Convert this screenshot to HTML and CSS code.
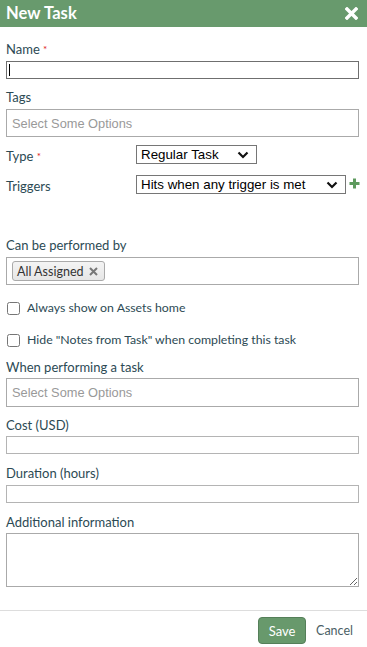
FILE: index.html
```html
<!DOCTYPE html>
<html lang="en">
<head>
  <meta charset="UTF-8" />
  <meta name="viewport" content="width=device-width, initial-scale=1" />
  <title>New Task</title>
  <link rel="stylesheet" href="styles.css">
</head>
<body>

  <header class="dlg-head">
    <h1>New Task</h1>
    <button class="close" aria-label="Close">
      <svg width="13" height="13" viewBox="0 0 13 13"><path d="M2 2 L11 11 M11 2 L2 11" stroke="#fff" stroke-width="3.4" stroke-linecap="square"/></svg>
    </button>
  </header>

  <form class="dlg-body">
    <div class="field f-name">
      <label>Name <span class="req">*</span></label>
      <div class="caret-wrap"><input type="text" class="txt dark"><span class="caret"></span></div>
    </div>

    <div class="field f-tags">
      <label>Tags</label>
      <div class="chosen"><span class="ph">Select Some Options</span></div>
    </div>

    <div class="row f-type">
      <label>Type <span class="req">*</span></label>
      <div class="sel w-type">
        <select><option>Regular Task</option></select>
        <svg class="chev" width="12" height="8" viewBox="0 0 12 8"><path d="M1.5 1.5 L6 6 L10.5 1.5" fill="none" stroke="#111" stroke-width="2.2"/></svg>
      </div>
    </div>

    <div class="row f-trig">
      <label>Triggers</label>
      <div class="sel w-trig">
        <select><option>Hits when any trigger is met</option></select>
        <svg class="chev" width="12" height="8" viewBox="0 0 12 8"><path d="M1.5 1.5 L6 6 L10.5 1.5" fill="none" stroke="#111" stroke-width="2.2"/></svg>
      </div>
      <svg class="plus" width="11" height="11" viewBox="0 0 11 11"><path d="M5.5 0.5 V10.5 M0.5 5.5 H10.5" stroke="#5e9a5e" stroke-width="3"/></svg>
    </div>

    <div class="field f-perf">
      <label>Can be performed by</label>
      <div class="chosen">
        <span class="chip">All Assigned
          <svg width="9" height="9" viewBox="0 0 9 9"><path d="M1 1 L8 8 M8 1 L1 8" stroke="#777" stroke-width="2"/></svg>
        </span>
      </div>
    </div>

    <label class="check c-first"><input type="checkbox"> Always show on Assets home</label>
    <label class="check c-second"><input type="checkbox"> Hide "Notes from Task" when completing this task</label>

    <div class="field f-when">
      <label>When performing a task</label>
      <div class="chosen"><span class="ph">Select Some Options</span></div>
    </div>

    <div class="field f-cost">
      <label>Cost (USD)</label>
      <input type="text" class="txt">
    </div>

    <div class="field f-dur">
      <label>Duration (hours)</label>
      <input type="text" class="txt">
    </div>

    <div class="field f-info">
      <label>Additional information</label>
      <textarea class="area"></textarea>
    </div>
  </form>

  <footer class="dlg-foot">
    <button class="save">Save</button>
    <a href="#" class="cancel">Cancel</a>
  </footer>

</body>
</html>
```

FILE: styles.css
```css
* { margin:0; padding:0; box-sizing:border-box; }
body { font-family:Lato, "Open Sans", sans-serif; font-size:13px; color:#2c4a54; background:#fff; width:367px; }

.dlg-head { background:#689a6d; height:27px; display:flex; align-items:center; justify-content:space-between; padding:0 9px 0 6px; }
.dlg-head h1 { color:#fff; font-size:16.5px; font-weight:700; letter-spacing:0.1px; line-height:27px; }
.close { background:none; border:none; display:flex; margin-top:-1px; }

.dlg-body { padding:14px 8px 0 6px; }
.field label, .row label { display:block; line-height:16px; }
.field label { margin-bottom:4px; }
.req { color:#e02020; font-size:10px; vertical-align:top; }

.txt { display:block; width:100%; height:18px; border:1px solid #b4b4b4; font:12px Lato, sans-serif; outline:none; }
.txt.dark { border-color:#6f6f6f; }
.caret-wrap { position:relative; }
.caret { position:absolute; left:3px; top:3px; width:1px; height:12px; background:#000; }

.chosen { height:28px; border:1px solid #aaa; display:flex; align-items:center; padding:0 5px; }
.ph { font:12.8px "Liberation Sans", Arial, sans-serif; color:#999; }
.chip { display:inline-flex; align-items:center; height:20px; padding:0 6px 0 4px; border:1px solid #aaa; border-radius:3px; background:linear-gradient(#f4f4f4, #e6e6e6); color:#333; font-size:12.5px; }
.chip svg { margin-left:6px; }

.row { display:grid; grid-template-columns:130px auto auto; justify-content:start; align-items:center; }
.sel { position:relative; }
.sel select { appearance:none; -webkit-appearance:none; display:block; height:19px; border:1px solid #767676; border-radius:0; background:#fff; font:13.33px "Liberation Sans", Arial, sans-serif; color:#000; padding:0 0 0 4px; }
.w-type select { width:121px; }
.w-trig select { width:210px; }
.chev { position:absolute; right:8px; top:6px; }
.plus { margin-left:3px; margin-top:-2px; }

.f-name { margin-bottom:10px; }
.f-tags { margin-bottom:8px; }
.f-type { margin-bottom:10px; }
.f-type label { margin-top:3px; }
.f-trig label { margin-top:4px; }
.f-trig { margin-bottom:43px; }
.f-perf { margin-bottom:15px; }

.check { display:flex; align-items:center; line-height:16px; padding-left:1px; font-size:12.3px; }
.check input { width:13px; height:13px; margin:0 7px 0 0; accent-color:#555; }
.c-first { margin-bottom:16px; }
.c-second { margin-bottom:11px; }
.f-when .chosen { height:29px; }
.f-when label { margin-bottom:3px; }
.f-when { margin-bottom:10px; }
.f-cost label { margin-bottom:3px; }
.f-cost { margin-bottom:11px; }
.f-dur { margin-bottom:11px; }
.f-dur label { margin-bottom:4px; }
.f-info label { margin-bottom:3px; }
.area { display:block; width:100%; height:54px; border:1px solid #aaa; resize:both; font:12px Lato, sans-serif; }

.dlg-foot { margin-top:23px; border-top:1px solid #ddd; display:flex; justify-content:flex-end; align-items:center; padding:6px 14px 0 0; }
.save { height:27px; width:48px; background:#68996c; color:#fff; border:1px solid #557f59; border-radius:4px; font:13px Lato, sans-serif; }
.cancel { color:#4b5f66; text-decoration:none; font-size:12.5px; margin-left:10px; }
```
